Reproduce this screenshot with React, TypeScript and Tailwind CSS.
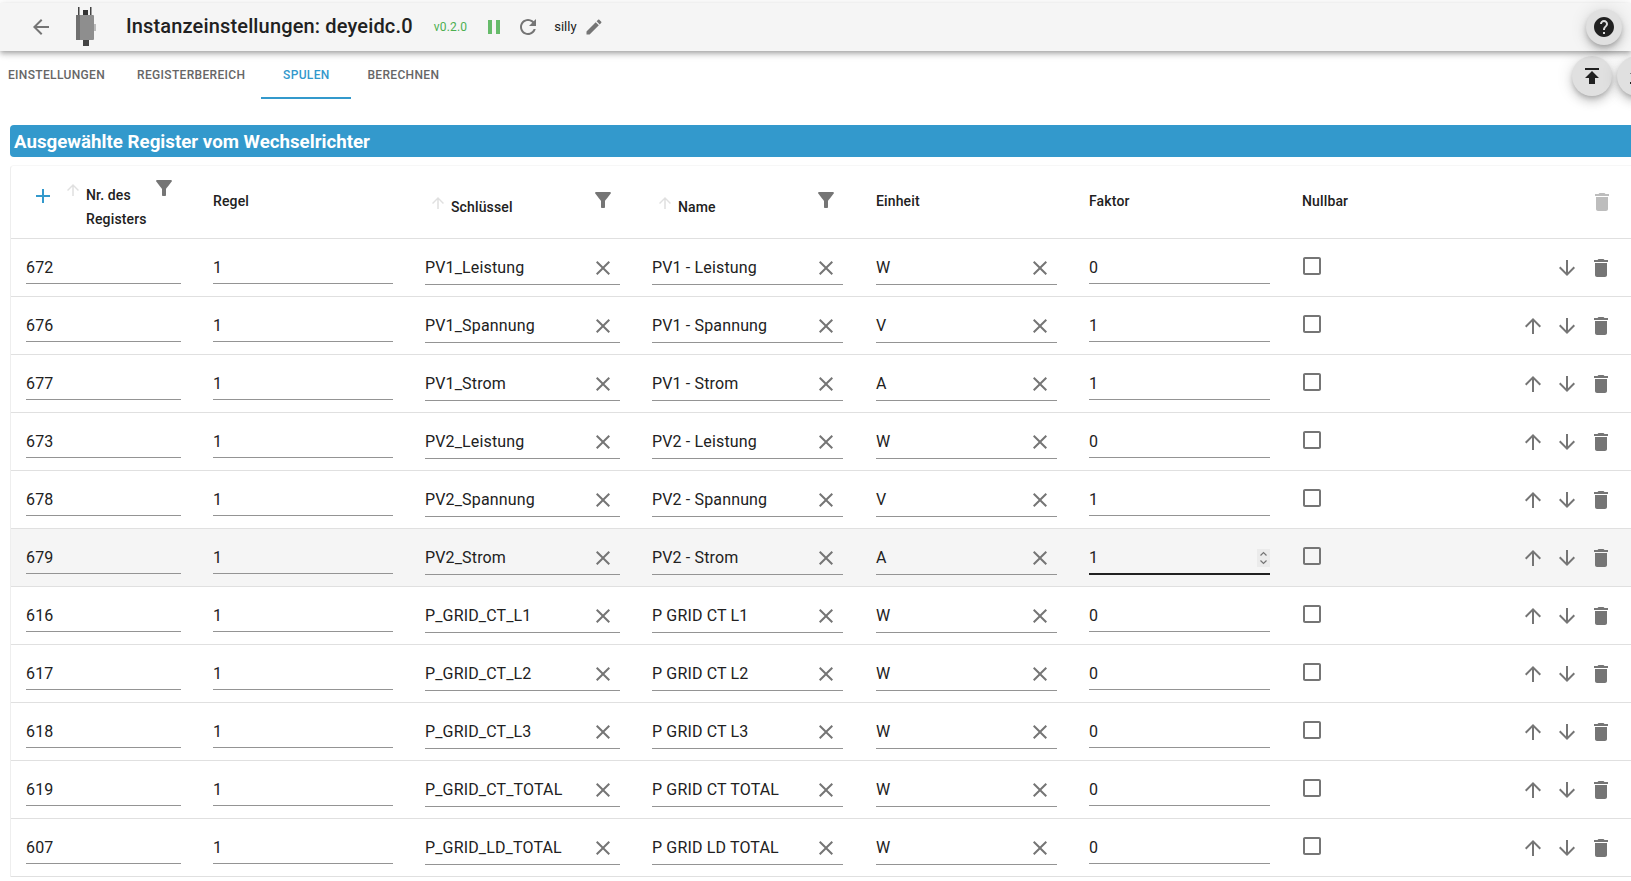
const P = {
  back: 'M20 11H7.83l5.59-5.59L12 4l-8 8 8 8 1.41-1.41L7.83 13H20v-2z',
  pause: 'M6 19h4V5H6v14zm8-14v14h4V5h-4z',
  refresh: 'M17.65 6.35C16.2 4.9 14.21 4 12 4c-4.42 0-7.99 3.58-7.99 8s3.57 8 7.99 8c3.73 0 6.84-2.55 7.73-6h-2.08c-.82 2.33-3.04 4-5.65 4-3.31 0-6-2.69-6-6s2.69-6 6-6c1.66 0 3.14.69 4.22 1.78L13 11h7V4l-2.35 2.35z',
  edit: 'M3 17.25V21h3.75L17.81 9.94l-3.75-3.75L3 17.25zM20.71 7.04c.39-.39.39-1.02 0-1.41l-2.34-2.34c-.39-.39-1.02-.39-1.41 0l-1.83 1.83 3.75 3.75 1.83-1.83z',
  help: 'M12 2C6.48 2 2 6.48 2 12s4.48 10 10 10 10-4.48 10-10S17.52 2 12 2zm1 17h-2v-2h2v2zm2.07-7.75l-.9.92C13.45 12.9 13 13.5 13 15h-2v-.5c0-1.1.45-2.1 1.17-2.83l1.24-1.26c.37-.36.59-.86.59-1.41 0-1.1-.9-2-2-2s-2 .9-2 2H8c0-2.21 1.79-4 4-4s4 1.79 4 4c0 .88-.36 1.68-.93 2.25z',
  publish: 'M5 4v2h14V4H5zm0 10h4v6h6v-6h4l-7-7-7 7z',
  getApp: 'M19 9h-4V3H9v6H5l7 7 7-7zM5 18v2h14v-2H5z',
  add: 'M19 13h-6v6h-2v-6H5v-2h6V5h2v6h6v2z',
  up: 'M4 12l1.41 1.41L11 7.83V20h2V7.83l5.58 5.59L20 12l-8-8-8 8z',
  down: 'M20 12l-1.41-1.41L13 16.17V4h-2v12.17l-5.58-5.59L4 12l8 8 8-8z',
  del: 'M6 19c0 1.1.9 2 2 2h8c1.1 0 2-.9 2-2V7H6v12zM19 4h-3.5l-1-1h-5l-1 1H5v2h14V4z',
  close: 'M19 6.41L17.59 5 12 10.59 6.41 5 5 6.41 10.59 12 5 17.59 6.41 19 12 13.41 17.59 19 19 17.59 13.41 12z',
  filter: 'M4.25 5.61C6.27 8.2 10 13 10 13v6c0 .55.45 1 1 1h2c.55 0 1-.45 1-1v-6s3.72-4.8 5.74-7.39c.51-.66.04-1.61-.79-1.61H5.04c-.83 0-1.3.95-.79 1.61z',
  check: 'M19 5v14H5V5h14m0-2H5c-1.1 0-2 .9-2 2v14c0 1.1.9 2 2 2h14c1.1 0 2-.9 2-2V5c0-1.1-.9-2-2-2z',
}

const Icon = ({ d, className }: { d: string; className: string }) => (
  <svg viewBox="0 0 24 24" fill="currentColor" className={className}>
    <path d={d} />
  </svg>
)

const rows = [
  ['672', 'PV1_Leistung', 'PV1 - Leistung', 'W', '0'],
  ['676', 'PV1_Spannung', 'PV1 - Spannung', 'V', '1'],
  ['677', 'PV1_Strom', 'PV1 - Strom', 'A', '1'],
  ['673', 'PV2_Leistung', 'PV2 - Leistung', 'W', '0'],
  ['678', 'PV2_Spannung', 'PV2 - Spannung', 'V', '1'],
  ['679', 'PV2_Strom', 'PV2 - Strom', 'A', '1'],
  ['616', 'P_GRID_CT_L1', 'P GRID CT L1', 'W', '0'],
  ['617', 'P_GRID_CT_L2', 'P GRID CT L2', 'W', '0'],
  ['618', 'P_GRID_CT_L3', 'P GRID CT L3', 'W', '0'],
  ['619', 'P_GRID_CT_TOTAL', 'P GRID CT TOTAL', 'W', '0'],
  ['607', 'P_GRID_LD_TOTAL', 'P GRID LD TOTAL', 'W', '0'],
]

const gridCols = 'grid grid-cols-[155px_180px_195px_192px_181px_181px_1fr] gap-x-[32px] pl-[15px]'

const Field = ({ value, clear, focused }: { value: string; clear?: boolean; focused?: boolean }) => (
  <div
    className={`flex items-center justify-between h-[32px] text-[16px] tracking-[0.15px] text-[#212121] ${clear ? 'mt-[14px] pb-[2px]' : 'mt-[13px]'} ${
      focused ? 'border-b-2 border-[#212121] h-[33px]' : 'border-b border-[#949494]'
    }`}
  >
    <span>{value}</span>
    {clear && <Icon d={P.close} className="w-6 h-6 text-[#757575] mr-[5px]" />}
    {focused && (
      <svg viewBox="0 0 13 18" className="w-[13px] h-[18px] bg-[#ebebeb] text-[#757575]" fill="none" stroke="currentColor" strokeWidth="1.2">
        <path d="M3.5 6.5 6.5 3.5 9.5 6.5M3.5 11.5 6.5 14.5 9.5 11.5" />
      </svg>
    )}
  </div>
)

const SortHead = ({ label, filterClass }: { label: string; filterClass: string }) => (
  <div className="flex items-start relative h-full">
    <Icon d={P.up} className="w-[18px] h-[18px] mt-[28px] ml-[4px] text-[#e0e0e0]" />
    <span className="ml-[4px] mt-[29px] leading-6">{label}</span>
    <Icon d={P.filter} className={filterClass} />
  </div>
)

const Logo = () => (
  <svg viewBox="0 0 22 40" className="w-[22px] h-[40px] mx-[22px]">
    <rect x="3" y="0" width="1.5" height="10" fill="#444" />
    <rect x="15" y="0" width="1.5" height="10" fill="#444" />
    <rect x="8" y="3" width="5" height="6" fill="#333" />
    <rect x="8" y="32" width="6" height="7" fill="#444" />
    <rect x="1" y="8" width="18" height="25" rx="1" fill="#8e8e8e" />
    <rect x="1" y="8" width="4" height="25" fill="#6f6f6f" />
    <rect x="19" y="17" width="2" height="7" fill="#bbb" />
  </svg>
)

export default function App() {
  return (
    <div className="h-screen w-full overflow-hidden bg-white font-[Roboto,sans-serif] text-[#212121]">
      <header className="mt-[3px] h-[48px] bg-[#f5f5f5] flex items-center shadow-[0_2px_4px_-1px_rgba(0,0,0,.2),0_4px_5px_0_rgba(0,0,0,.14),0_1px_10px_0_rgba(0,0,0,.12)] relative z-10">
        <Icon d={P.back} className="w-6 h-6 ml-[29px] text-[#757575]" />
        <Logo />
        <h1 className="ml-[7px] pb-[3px] text-[20px] font-medium tracking-[0.15px]">Instanzeinstellungen: deyeidc.0</h1>
        <span className="ml-[21px] text-[12px] tracking-[0.2px] text-[#4caf50]">v0.2.0</span>
        <Icon d={P.pause} className="w-6 h-6 ml-[15px] text-[#66bb6a]" />
        <Icon d={P.refresh} className="w-6 h-6 ml-[10px] text-[#757575]" />
        <span className="ml-[14px] text-[13px]">silly</span>
        <Icon d={P.edit} className="w-5 h-5 ml-[7px] text-[#757575]" />
        <button className="ml-auto mr-[9px] w-9 h-9 rounded-full bg-[#e0e0e0] flex items-center justify-center shadow-[0_3px_5px_-1px_rgba(0,0,0,.2),0_6px_10px_0_rgba(0,0,0,.14),0_1px_18px_0_rgba(0,0,0,.12)]">
          <Icon d={P.help} className="w-6 h-6 text-[#212121]" />
        </button>
      </header>

      <div className="h-[48px] flex items-start text-[12px] font-medium uppercase tracking-[0.34px] text-[#666]">
        <div className="h-full pl-[8px] pr-[16px] flex items-center">Einstellungen</div>
        <div className="h-full px-[16px] flex items-center">Registerbereich</div>
        <div className="h-full w-[90px] pt-[2px] flex items-center justify-center border-b-2 border-[#3399cc] text-[#3399cc]">Spulen</div>
        <div className="h-full px-[16px] flex items-center">Berechnen</div>
        <div className="ml-auto mr-[-26px] mt-[5px] flex gap-[5px]">
          <button className="w-10 h-10 rounded-full bg-[#e0e0e0] flex items-center justify-center shadow-[0_3px_5px_-1px_rgba(0,0,0,.2),0_6px_10px_0_rgba(0,0,0,.14),0_1px_18px_0_rgba(0,0,0,.12)]">
            <Icon d={P.publish} className="w-6 h-6 text-[#212121]" />
          </button>
          <button className="w-10 h-10 rounded-full bg-[#e0e0e0] flex items-center justify-center shadow-[0_3px_5px_-1px_rgba(0,0,0,.2),0_6px_10px_0_rgba(0,0,0,.14),0_1px_18px_0_rgba(0,0,0,.12)]">
            <Icon d={P.getApp} className="w-6 h-6 text-[#212121]" />
          </button>
        </div>
      </div>

      <div className="ml-[10px] mt-[26px]">
        <div className="h-[32px] rounded-l-[4px] bg-[#3399cc] pl-[4px] pt-[2px] flex items-center text-white text-[18.72px] font-bold">
          Ausgewählte Register vom Wechselrichter
        </div>

        <div className="mt-[8px] border-l border-t border-l-[#eeeeee] border-t-[#f7f7f7] rounded-tl-[4px]">
          <div className={`${gridCols} h-[73px] border-b border-[#e0e0e0] text-[14px] font-medium tracking-[0.14px]`}>
            <div className="flex items-start relative">
              <Icon d={P.add} className="w-6 h-6 text-[#3399cc] mt-[18px] ml-[5px] shrink-0" />
              <Icon d={P.up} className="w-[18px] h-[18px] mt-[15px] ml-[9px] text-[#e0e0e0] shrink-0" />
              <span className="ml-[4px] mt-[17px] leading-6 w-[70px]">Nr. des Registers</span>
              <Icon d={P.filter} className="w-6 h-6 text-[#757575] absolute left-[126px] top-[10px]" />
            </div>
            <div className="mt-[23px] leading-6">Regel</div>
            <SortHead label="Schlüssel" filterClass="w-6 h-6 text-[#757575] absolute right-[5px] top-[22px]" />
            <SortHead label="Name" filterClass="w-6 h-6 text-[#757575] absolute right-[6px] top-[22px]" />
            <div className="mt-[23px] leading-6">Einheit</div>
            <div className="mt-[23px] leading-6">Faktor</div>
            <div className="flex justify-between pr-[17px]">
              <span className="mt-[23px] leading-6">Nullbar</span>
              <Icon d={P.del} className="w-6 h-6 mt-[24px] text-[#bdbdbd]" />
            </div>
          </div>

          {rows.map((r, i) => (
            <div key={r[0]} className={`${gridCols} h-[58px] border-b border-[#e0e0e0] ${i === 5 ? 'bg-[#f5f5f5]' : ''}`}>
              <Field value={r[0]} />
              <Field value="1" />
              <Field value={r[1]} clear />
              <div className="mr-[1px]">
                <Field value={r[2]} clear />
              </div>
              <Field value={r[3]} clear />
              <Field value={r[4]} focused={i === 5} />
              <div className="flex items-start justify-between pr-[18px]">
                <Icon d={P.check} className="w-6 h-6 mt-[15px] ml-[-2px] text-[#757575]" />
                <div className="flex gap-[10px] mt-[17px]">
                  {i > 0 && <Icon d={P.up} className="w-6 h-6 text-[#757575]" />}
                  <Icon d={P.down} className="w-6 h-6 text-[#757575]" />
                  <Icon d={P.del} className="w-6 h-6 text-[#757575]" />
                </div>
              </div>
            </div>
          ))}
        </div>
      </div>
    </div>
  )
}
